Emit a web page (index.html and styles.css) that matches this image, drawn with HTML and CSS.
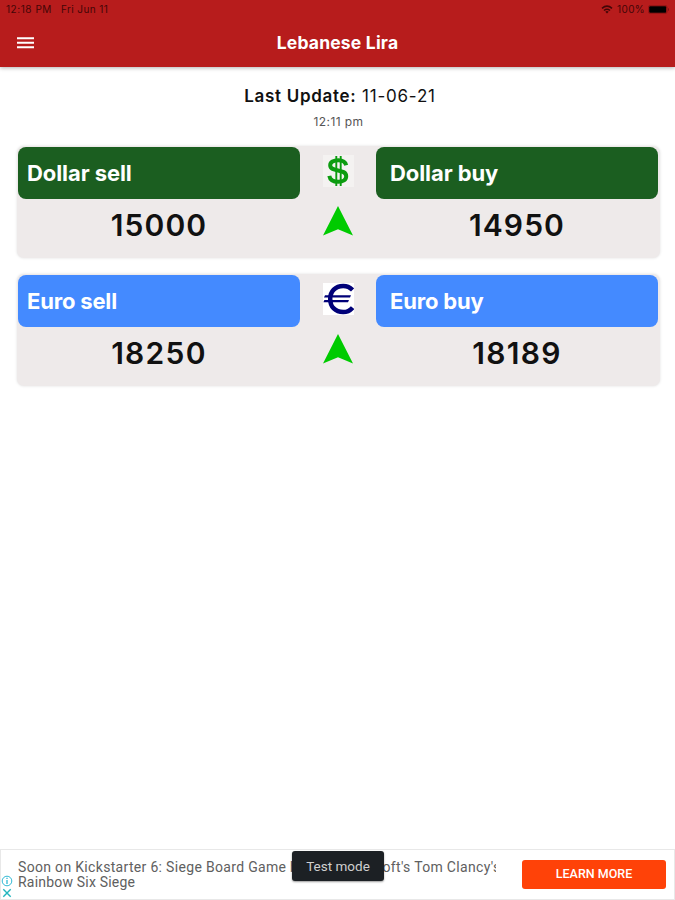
FILE: index.html
```html
<!DOCTYPE html>
<html lang="en">
<head>
<meta charset="utf-8">
<title>Lebanese Lira</title>
<link rel="stylesheet" href="styles.css">
</head>
<body>
<header class="header">
  <div class="status">
    <span class="time">12:18 PM</span><span class="date">Fri Jun 11</span>
    <svg class="wifi" width="12" height="9" viewBox="0 0 12 9"><path d="M1 3.4Q6-1 11 3.4M3 5.5Q6 3 9 5.5" fill="none" stroke="currentColor" stroke-width="1.6"/><path d="M4.3 6.7Q6 5.4 7.7 6.7L6 8.6z" fill="currentColor"/></svg>
    <span class="percent">100%</span>
    <svg class="battery" width="22" height="9" viewBox="0 0 22 9"><rect x=".4" y=".4" width="18.7" height="8.2" rx="2" fill="none" stroke="currentColor" stroke-width=".6" opacity=".5"/><rect x="1.2" y="1.2" width="17" height="6.6" rx="1" fill="#000"/><path d="M20 3v3q1-.4 1-1.5T20 3" fill="currentColor" opacity=".5"/></svg>
  </div>
  <div class="toolbar">
    <svg class="menu" width="18" height="12" viewBox="0 0 18 12"><path d="M0 1.3h17M0 5.8h17M0 10.3h17" stroke="#fff" stroke-width="2"/></svg>
    <h1 class="title">Lebanese Lira</h1>
  </div>
</header>
<main class="content">
  <p class="update"><b>Last Update:</b> 11-06-21</p>
  <p class="clock">12:11 pm</p>
  <section class="card dollar">
    <div class="rate"><h2 class="label">Dollar sell</h2><p class="value">15000</p></div>
    <div class="symbols">
      <svg class="currency" width="31" height="32" viewBox="0 0 31 32"><rect width="31" height="32" fill="#f4f2f1"/><path d="M23.2 10.2C22.4 6.8 19.3 5.2 15.3 5.2C10.7 5.2 7.2 7 7.2 10.3C7.2 17.8 23.2 13.2 23.2 21.2C23.2 24.8 19.9 26.8 15.4 26.8C10.4 26.8 7 24.7 6.3 20.8" fill="none" stroke="#0c9c10" stroke-width="4"/><path d="M13.3 1v30M17.7 1v30" stroke="#0c9c10" stroke-width="1.9"/></svg>
      <svg class="arrow" width="30" height="30" viewBox="0 0 30 30"><path d="M15 0L30 29.5L15 23.3L0 29.5z" fill="#00cb00"/></svg>
    </div>
    <div class="rate"><h2 class="label">Dollar buy</h2><p class="value">14950</p></div>
  </section>
  <section class="card euro">
    <div class="rate"><h2 class="label">Euro sell</h2><p class="value">18250</p></div>
    <div class="symbols">
      <svg class="currency" width="31" height="32" viewBox="0 0 31 32"><rect width="31" height="32" fill="#fff"/><path d="M29.6 7C26.7 4.1 23.6 3 20.2 3C12.3 3 7.2 8.5 7.2 15.9C7.2 23.9 12.3 29 20.2 29C24 29 27 27.6 29.6 24.6" fill="none" stroke="#000078" stroke-width="4.5"/><path d="M2 12.2h26l-1 2.3H1zM1.4 17H26l-1 2.2H.4z" fill="#000078"/></svg>
      <svg class="arrow" width="30" height="30" viewBox="0 0 30 30"><path d="M15 0L30 29.5L15 23.3L0 29.5z" fill="#00cb00"/></svg>
    </div>
    <div class="rate"><h2 class="label">Euro buy</h2><p class="value">18189</p></div>
  </section>
</main>
<footer class="ad">
  <div class="ad-marks">
    <svg width="12" height="12" viewBox="0 0 12 12"><circle cx="6" cy="6" r="4.8" fill="none" stroke="#31b9d4"/><path d="M6 5v4M6 2.8v1.3" stroke="#31b9d4" stroke-width="1.3"/></svg>
    <svg width="12" height="12" viewBox="0 0 12 12"><path d="M2.3 2.3l7.4 7.4M9.7 2.3L2.3 9.7" stroke="#21b5be" stroke-width="1.4"/></svg>
  </div>
  <p class="ad-text"><span class="ad-line">Soon on Kickstarter 6: Siege Board Game based on Ubisoft's Tom Clancy's</span><span class="ad-line second">Rainbow Six Siege</span></p>
  <a class="ad-button">LEARN MORE</a>
  <div class="toast">Test mode</div>
</footer>
</body>
</html>
```
FILE: styles.css
```css
* { box-sizing: border-box; }
body { margin: 0; height: 900px; display: flex; flex-direction: column; background: #fff; color: #111; font-family: Inter, sans-serif; overflow: hidden; }
h1, h2, p { margin: 0; }
svg { display: block; flex: none; }
.header { height: 67px; flex: none; background: #b71c1c; box-shadow: 0 1px 4px rgba(0,0,0,.3); }
.status { height: 18px; padding: 0 5px 0 6px; display: flex; align-items: center; color: #430607; font-size: 10px; letter-spacing: .55px; white-space: nowrap; }
.date { margin-left: 9px; letter-spacing: .4px; }
.wifi { margin-left: auto; }
.percent { margin: 0 3px 0 4px; letter-spacing: .35px; }
.toolbar { height: 49px; display: grid; grid-template-columns: 17px 1fr 17px; align-items: center; padding: 0 17px; }
.title { color: #fff; text-align: center; font-size: 17.5px; font-weight: 700; line-height: 24px; letter-spacing: .2px; }
.content { flex: 1; padding: 17px 15px 0 17px; }
.update { height: 24px; line-height: 24px; font-size: 17px; text-align: center; letter-spacing: .8px; padding-left: 3px; }
.update b { font-weight: 600; letter-spacing: .7px; }
.clock { height: 28px; line-height: 28px; font-size: 12px; text-align: center; color: #555; letter-spacing: .4px; }
.card { height: 112px; margin-top: 10px; padding: 1px 2px 0 1px; display: grid; grid-template-columns: 282px 1fr 282px; background: #eeeaea; border-radius: 7px; box-shadow: 0 0 3px rgba(0,0,0,.13); }
.card + .card { margin-top: 15.5px; }
.label { height: 52px; line-height: 52px; border-radius: 8px; color: #fff; padding-left: 9px; font-size: 22px; font-weight: 700; letter-spacing: -.08px; }
.euro .label { letter-spacing: -.18px; }
.rate:last-child .label { padding-left: 14px; }
.dollar .label { background: #1b5e20; }
.euro .label { background: #448aff; }
.value { text-align: center; line-height: 53px; font-size: 30px; font-weight: 600; letter-spacing: 1.1px; }
.euro .value { letter-spacing: 1.3px; }
.symbols { display: flex; flex-direction: column; align-items: center; padding-top: 8px; gap: 19px; }
.ad { position: relative; flex: none; height: 51px; border: 1px solid #e8e8e8; display: flex; padding-right: 8px; }
.ad-marks { width: 17px; padding: 25px 0 0; flex: none; }
.ad-text { width: 478px; flex: none; padding-top: 10px; overflow: hidden; color: #606060; font-family: Roboto, sans-serif; font-size: 14px; line-height: 15px; letter-spacing: .32px; }
.ad-line { display: block; white-space: nowrap; }
.second { letter-spacing: .2px; }
.ad-button { margin: 10px 0 0 auto; width: 144px; height: 29px; text-align: center; border-radius: 3px; background: #ff4208; color: #fff; font: 500 12.5px/28px Roboto, sans-serif; }
.toast { position: absolute; left: 291px; top: 1px; width: 92px; height: 30px; border-radius: 3px; background: #1c2024; color: #d0d0d0; text-align: center; font: 13.5px/30px Roboto, sans-serif; box-shadow: 0 1px 2px rgba(0,0,0,.4); }
```
